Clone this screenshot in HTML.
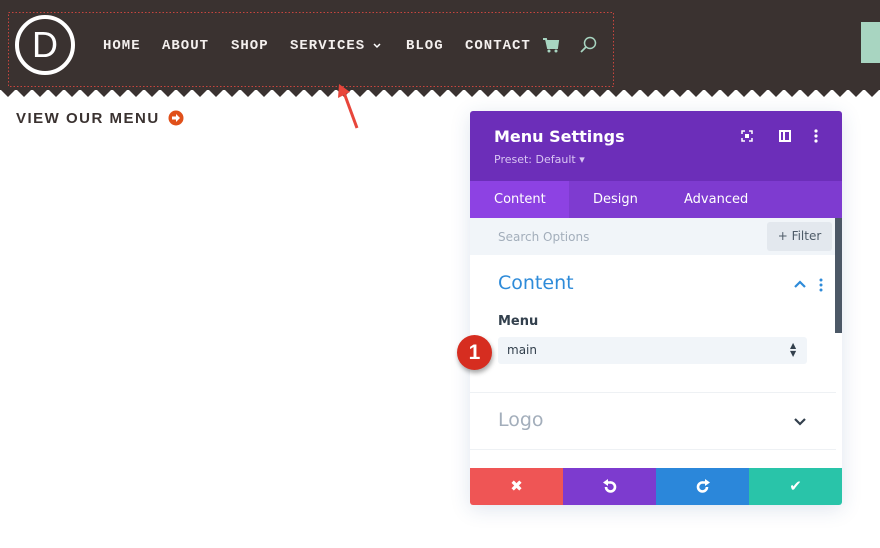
<!DOCTYPE html>
<html><head><style>
*{margin:0;padding:0;box-sizing:border-box}
body{width:880px;height:548px;background:#fff;position:relative;overflow:hidden;font-family:"Liberation Sans",sans-serif}
.hdr{position:absolute;left:0;top:0;width:880px;height:90px;background:#3a3230}
.nav{position:absolute;top:38px;font-family:"Liberation Mono",monospace;font-weight:bold;font-size:14px;color:#f4f0ee;letter-spacing:1px}
.abs{position:absolute}
.os{font-family:"DejaVu Sans","Liberation Sans",sans-serif}
</style></head><body>
<div class="hdr"></div>
<svg class="abs" style="left:0;top:88px" width="880" height="12"><defs><pattern id="z" width="16" height="12" patternUnits="userSpaceOnUse"><path d="M0 0H16V1L8 9L0 1Z" fill="#3a3230"/></pattern></defs><rect width="880" height="12" fill="url(#z)"/></svg>
<svg class="abs" style="left:8px;top:12px" width="607" height="76"><rect x="0.5" y="0.5" width="605" height="74" fill="none" stroke="#c9453e" stroke-dasharray="1.5 2"/></svg>
<div class="abs" style="left:15px;top:15px;width:60px;height:60px;border:4px solid #fff;border-radius:50%;color:#fff;font-size:36px;text-align:center;line-height:52px">D</div>
<div class="nav" style="left:103px">HOME</div>
<div class="nav" style="left:162px">ABOUT</div>
<div class="nav" style="left:231px">SHOP</div>
<div class="nav" style="left:290px">SERVICES</div>
<svg class="abs" style="left:372px;top:42px" width="10" height="8"><path d="M2 2L5 5L8 2" stroke="#fff" stroke-width="1.5" fill="none"/></svg>
<div class="nav" style="left:406px">BLOG</div>
<div class="nav" style="left:465px">CONTACT</div>
<svg class="abs" style="left:542px;top:37px" width="18" height="16"><path d="M1 2H4L6 11H15L16 4H5" stroke="#a8d5c1" stroke-width="2" fill="#a8d5c1"/><circle cx="7" cy="14" r="1.5" fill="#a8d5c1"/><circle cx="14" cy="14" r="1.5" fill="#a8d5c1"/></svg>
<svg class="abs" style="left:579px;top:36px" width="18" height="18"><circle cx="11" cy="7" r="5.5" stroke="#a8d5c1" stroke-width="1.5" fill="none"/><path d="M7 11L2 16" stroke="#a8d5c1" stroke-width="1.8"/></svg>
<div class="abs" style="left:861px;top:22px;width:19px;height:41px;background:#a8d5c1"></div>
<div class="abs" style="left:16px;top:110px;font-weight:bold;font-size:15px;letter-spacing:1.5px;color:#3a3230">VIEW OUR MENU</div>
<svg class="abs" style="left:168px;top:110px" width="16" height="16"><circle cx="8" cy="8" r="7.5" fill="#e0501a"/><path d="M4 6.5H8V4L12 8L8 12V9.5H4Z" fill="#fff"/></svg>
<svg class="abs" style="left:330px;top:78px" width="40" height="55"><path d="M27 50L13 12" stroke="#e8463b" stroke-width="3"/><path d="M9 6L8 20L20 14Z" fill="#e8463b"/></svg>

<div class="abs os" style="left:470px;top:111px;width:372px;height:394px;background:#fff;box-shadow:0 4px 20px rgba(40,80,140,.15);border-radius:3px;overflow:hidden">
 <div class="abs" style="left:0;top:0;width:372px;height:70px;background:#6c2eb9"></div>
 <div class="abs" style="left:24px;top:16px;color:#fff;font-size:16px;font-weight:bold">Menu Settings</div>
 <div class="abs" style="left:24px;top:42px;color:#d9c6f3;font-size:11px">Preset: Default ▾</div>
 <svg class="abs" style="left:271px;top:19px" width="12" height="12"><path d="M1 4V1H4M8 1H11V4M11 8V11H8M4 11H1V8" stroke="#fff" stroke-width="1.5" fill="none"/><rect x="4" y="4" width="4" height="4" fill="#fff"/></svg>
 <svg class="abs" style="left:309px;top:19px" width="12" height="12"><rect x="1" y="1" width="10" height="10" stroke="#fff" stroke-width="2" fill="none"/><rect x="4" y="1" width="2" height="10" fill="#fff"/></svg>
 <svg class="abs" style="left:344px;top:18px" width="4" height="14"><circle cx="2" cy="2" r="1.6" fill="#fff"/><circle cx="2" cy="7" r="1.6" fill="#fff"/><circle cx="2" cy="12" r="1.6" fill="#fff"/></svg>
 <div class="abs" style="left:0;top:70px;width:372px;height:37px;background:#7e3bd0"></div>
 <div class="abs" style="left:0;top:70px;width:99px;height:37px;background:#8d42e3"></div>
 <div class="abs" style="left:24px;top:81px;color:#fff;font-size:13px">Content</div>
 <div class="abs" style="left:123px;top:81px;color:#fff;font-size:13px">Design</div>
 <div class="abs" style="left:214px;top:81px;color:#fff;font-size:13px">Advanced</div>
 <div class="abs" style="left:0;top:107px;width:372px;height:37px;background:#f1f5f9"></div>
 <div class="abs" style="left:28px;top:119px;color:#a3aebb;font-size:12px">Search Options</div>
 <div class="abs" style="left:297px;top:111px;width:65px;height:29px;background:#e3e8ee;border-radius:3px;color:#4e5b68;font-size:12px;line-height:29px;text-align:center">+ Filter</div>
 <div class="abs" style="left:365px;top:107px;width:7px;height:115px;background:#4c5866"></div>
 <div class="abs" style="left:28px;top:161px;color:#2e8bd9;font-size:19px">Content</div>
 <svg class="abs" style="left:323px;top:168px" width="14" height="10"><path d="M2 8L7 3L12 8" stroke="#2e8bd9" stroke-width="2.2" fill="none"/></svg>
 <svg class="abs" style="left:349px;top:167px" width="4" height="14"><circle cx="2" cy="2" r="1.5" fill="#2e8bd9"/><circle cx="2" cy="7" r="1.5" fill="#2e8bd9"/><circle cx="2" cy="12" r="1.5" fill="#2e8bd9"/></svg>
 <div class="abs" style="left:28px;top:203px;color:#33404d;font-size:13px;font-weight:600">Menu</div>
 <div class="abs" style="left:28px;top:226px;width:309px;height:27px;background:#f1f5f9;border-radius:3px"></div>
 <div class="abs" style="left:37px;top:232px;color:#33404d;font-size:12px">main</div>
 <div class="abs" style="left:320px;top:231px;color:#33404d;font-size:8px;line-height:8px">▲<br>▼</div>
 <div class="abs" style="left:0;top:281px;width:366px;height:1px;background:#eef1f4"></div>
 <div class="abs" style="left:28px;top:298px;color:#a3aebb;font-size:19px">Logo</div>
 <svg class="abs" style="left:323px;top:306px" width="14" height="10"><path d="M2 2L7 7L12 2" stroke="#33404d" stroke-width="2.2" fill="none"/></svg>
 <div class="abs" style="left:0;top:338px;width:366px;height:1px;background:#eef1f4"></div>
 <div class="abs" style="left:0;top:357px;width:93px;height:37px;background:#ef5555;color:#fff;font-size:15px;font-weight:bold;text-align:center;line-height:37px">✖</div>
 <div class="abs" style="left:93px;top:357px;width:93px;height:37px;background:#7d3bcf"></div>
 <svg class="abs" style="left:132px;top:368px" width="16" height="16"><path d="M4 8A4.5 4.5 0 1 0 8 3.5H5" stroke="#fff" stroke-width="2.6" fill="none"/><path d="M1 3.5L6 0V7Z" fill="#fff"/></svg>
 <div class="abs" style="left:186px;top:357px;width:93px;height:37px;background:#2b87da"></div>
 <svg class="abs" style="left:225px;top:368px" width="16" height="16"><path d="M12 8A4.5 4.5 0 1 1 8 3.5H11" stroke="#fff" stroke-width="2.6" fill="none"/><path d="M15 3.5L10 0V7Z" fill="#fff"/></svg>
 <div class="abs" style="left:279px;top:357px;width:93px;height:37px;background:#29c4a9;color:#fff;font-size:15px;font-weight:bold;text-align:center;line-height:37px">✔</div>
</div>
<div class="abs" style="left:457px;top:335px;width:35px;height:35px;border-radius:50%;background:#d62d20;box-shadow:1px 3px 5px rgba(0,0,0,.35);color:#fff;font-size:21px;font-weight:bold;text-align:center;line-height:35px;font-family:'Liberation Sans',sans-serif">1</div>
</body></html>
